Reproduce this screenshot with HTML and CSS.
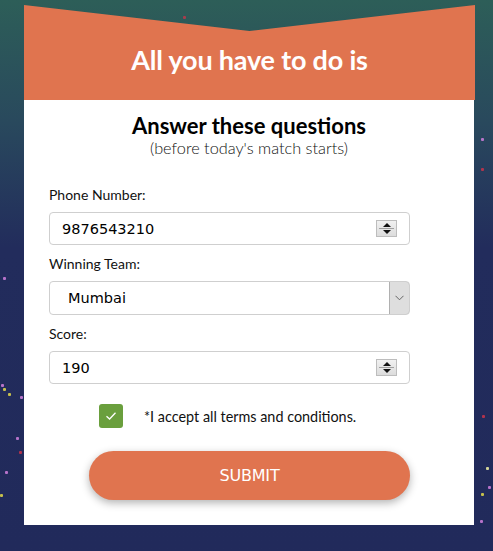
FILE: index.html
```html
<!DOCTYPE html>
<html>
<head>
<meta charset="utf-8">
<link rel="stylesheet" href="styles.css">
</head>
<body>
<div class="stage">
  <span class="dot" style="left:3px;top:388px;background:#d8d04a"></span>
  <span class="dot" style="left:1px;top:384px;background:#c77ad6"></span>
  <span class="dot" style="left:8px;top:393px;background:#d8d04a"></span>
  <span class="dot" style="left:20px;top:396px;background:#c77ad6"></span>
  <span class="dot" style="left:16px;top:437px;background:#c77ad6"></span>
  <span class="dot" style="left:19px;top:451px;background:#c0334a"></span>
  <span class="dot" style="left:5px;top:471px;background:#c77ad6"></span>
  <span class="dot" style="left:0px;top:494px;background:#d8d04a"></span>
  <span class="dot" style="left:3px;top:277px;background:#c77ad6"></span>
  <span class="dot" style="left:481px;top:138px;background:#c77ad6"></span>
  <span class="dot" style="left:481px;top:168px;background:#c0334a"></span>
  <span class="dot" style="left:482px;top:415px;background:#c0334a"></span>
  <span class="dot" style="left:486px;top:467px;background:#e8e8a0"></span>
  <span class="dot" style="left:488px;top:486px;background:#c77ad6"></span>
  <span class="dot" style="left:481px;top:493px;background:#d8d04a"></span>
  <span class="dot" style="left:480px;top:520px;background:#c77ad6"></span>
  <span class="dot" style="left:183px;top:16px;background:#b33a4a"></span>

  <div class="card">
    <div class="banner">
      <h1 class="banner-title">All you have to do is</h1>
    </div>
    <div class="body">
      <h2 class="heading">Answer these questions</h2>
      <p class="sub">(before today's match starts)</p>

      <div class="form">
        <label class="label first">Phone Number:</label>
        <div class="field">
          <span class="value">9876543210</span>
          <span class="spin"><span class="up"></span><span class="down"></span></span>
        </div>

        <label class="label">Winning Team:</label>
        <div class="field select">
          <span class="value team">Mumbai</span>
          <span class="drop">
            <svg width="9" height="6" viewBox="0 0 9 6"><path d="M0.5 0.8 L4.5 4.8 L8.5 0.8" fill="none" stroke="#666" stroke-width="1"/></svg>
          </span>
        </div>

        <label class="label">Score:</label>
        <div class="field">
          <span class="value">190</span>
          <span class="spin"><span class="up"></span><span class="down"></span></span>
        </div>

        <div class="terms">
          <span class="check">
            <svg width="12" height="10" viewBox="0 0 12 10"><path d="M1.5 5.2 L4.6 8 L10.5 1.8" fill="none" stroke="#fff" stroke-width="1.3"/></svg>
          </span>
          <span class="terms-text">*I accept all terms and conditions.</span>
        </div>

        <div class="submit-row">
          <button class="submit">SUBMIT</button>
        </div>
      </div>
    </div>
  </div>
</div>
</body>
</html>
```

FILE: styles.css
```css
* { box-sizing: border-box; }
html, body { margin: 0; padding: 0; }
body {
  width: 493px;
  height: 551px;
  overflow: hidden;
  background: linear-gradient(180deg, #2d5e58 0%, #29495d 22%, #222c5c 45%, #212a5b 100%);
  font-family: Lato, "Open Sans", sans-serif;
}
.stage {
  position: relative;
  width: 493px;
  height: 551px;
  padding: 5px 19px 0 24px;
}
.dot {
  position: absolute;
  width: 3px;
  height: 3px;
  border-radius: 1px;
  opacity: 0.9;
}
.card {
  width: 450px;
  display: flex;
  flex-direction: column;
}
.banner {
  height: 95px;
  width: 451px;
  background: #e0744f;
  clip-path: polygon(0 0, 50% 26px, 100% 0, 100% 100%, 0 100%);
  display: flex;
  align-items: center;
  justify-content: center;
  padding-top: 14px;
}
.banner-title {
  margin: 0;
  color: #fff;
  font-family: Lato, "Open Sans", sans-serif;
  font-weight: 700;
  font-size: 27px;
  letter-spacing: -0.2px;
}
.body {
  background: #fff;
  height: 425px;
  padding-top: 13px;
}
.heading {
  margin: 0;
  text-align: center;
  font-family: Lato, sans-serif;
  font-weight: 700;
  font-size: 22px;
  color: #000;
  line-height: 26px;
}
.sub {
  margin: 0;
  text-align: center;
  font-family: Lato, sans-serif;
  font-weight: 300;
  font-size: 16.3px;
  color: #111;
  line-height: 17px;
}
.form {
  display: flex;
  flex-direction: column;
  padding: 0 0 0 25px;
  width: 386px;
  margin-top: 30px;
}
.label {
  font-family: Lato, sans-serif;
  font-size: 14px;
  color: #111;
  line-height: 17px;
  margin-top: 10px;
  margin-bottom: 9px;
}
.label.first { margin-top: 0; }
.field {
  height: 33px;
  border: 1px solid #cfcfcf;
  border-radius: 4px;
  display: flex;
  align-items: center;
  justify-content: space-between;
  padding: 0 12px 0 12px;
}
.value {
  font-family: "DejaVu Sans", Tahoma, sans-serif;
  font-size: 14.5px;
  color: #000;
}
.team { padding-left: 6px; }
.select {
  height: 34px;
  padding-right: 0;
  overflow: hidden;
}
.spin {
  width: 21px;
  height: 17px;
  border: 1px solid #bdbdbd;
  background: linear-gradient(#f1f1f1, #dcdcdc);
  display: flex;
  flex-direction: column;
  align-items: center;
  justify-content: space-around;
  position: relative;
}
.spin::after {
  content: "";
  position: absolute;
  left: 2px;
  right: 2px;
  top: 7px;
  border-top: 1px solid #a0a0a0;
}
.up {
  width: 0; height: 0;
  border-left: 4px solid transparent;
  border-right: 4px solid transparent;
  border-bottom: 4px solid #111;
}
.down {
  width: 0; height: 0;
  border-left: 4px solid transparent;
  border-right: 4px solid transparent;
  border-top: 4px solid #111;
}
.drop {
  width: 21px;
  height: 34px;
  margin-right: -1px;
  background: #dedede;
  border: 1px solid #b0b0b0;
  border-radius: 0 4px 4px 0;
  display: flex;
  align-items: center;
  justify-content: center;
}
.terms {
  display: flex;
  align-items: center;
  margin-top: 20px;
  padding-left: 50px;
}
.check {
  width: 24px;
  height: 24px;
  border-radius: 3px;
  background: #6a9f3d;
  display: flex;
  align-items: center;
  justify-content: center;
}
.terms-text {
  margin-left: 21px;
  font-family: Lato, sans-serif;
  font-size: 14.4px;
  color: #111;
}
.submit-row {
  margin-top: 23px;
  padding-left: 40px;
}
.submit {
  width: 321px;
  height: 49px;
  border: none;
  border-radius: 25px;
  background: #e0744f;
  color: #fff;
  font-family: Tahoma, "DejaVu Sans", sans-serif;
  font-size: 16px;
  letter-spacing: -0.2px;
  box-shadow: 0 3px 8px rgba(0, 0, 0, 0.3);
  cursor: pointer;
}
```
